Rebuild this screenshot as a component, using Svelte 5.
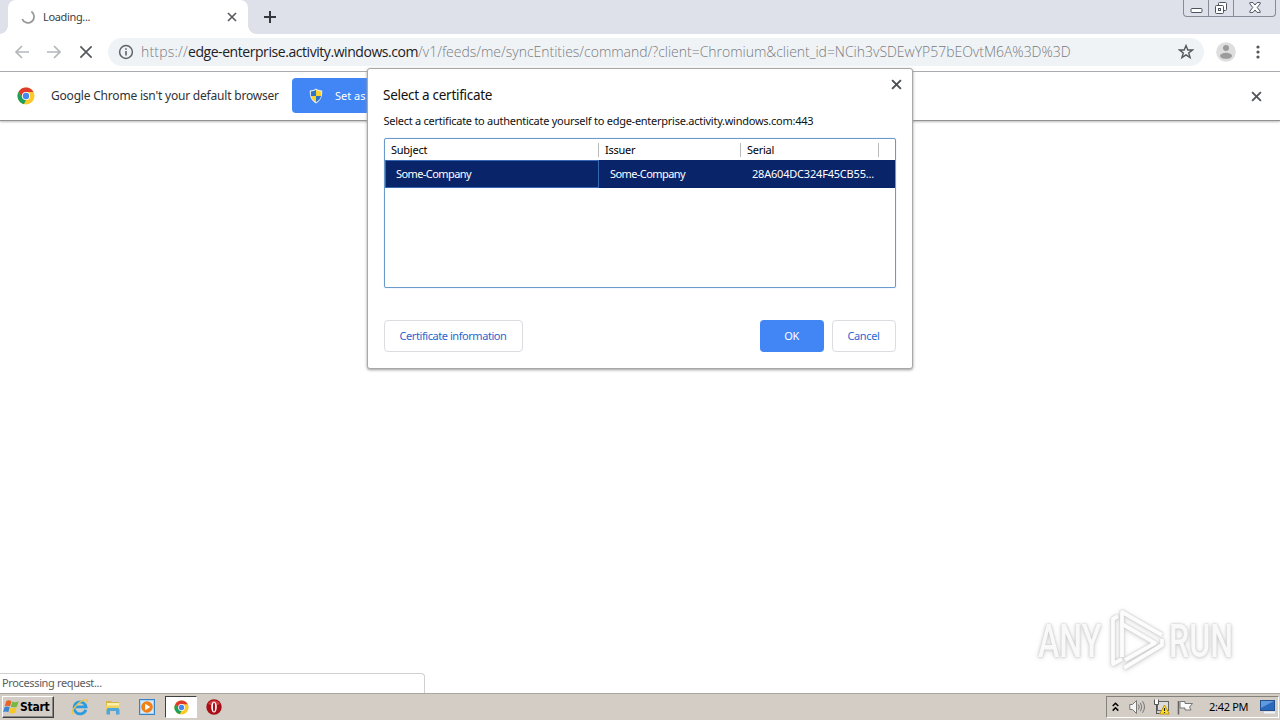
<script>
	const columns = [
		{ label: 'Subject', value: 'Some-Company' },
		{ label: 'Issuer', value: 'Some-Company' },
		{ label: 'Serial', value: '28A604DC324F45CB55...' }
	];
</script>

{#snippet cross(size, width, color)}
	<svg width={size} height={size} viewBox="0 0 10 10">
		<path d="M1 1L9 9M9 1L1 9" stroke={color} stroke-width={width} fill="none" />
	</svg>
{/snippet}

{#snippet chrome(size)}
	<svg width={size} height={size} viewBox="0 0 18 18">
		<circle cx="9" cy="9" r="8.5" fill="#fbc928" />
		<path d="M1.6 4.8A8.5 8.5 0 0 1 16.5 5H9L5.4 11Z" fill="#df3b2d" />
		<path d="M1.6 4.8L5.6 11L9 13L6.9 17.2A8.5 8.5 0 0 1 1.6 4.8Z" fill="#1da15a" />
		<circle cx="9" cy="9" r="4.1" fill="#fff" />
		<circle cx="9" cy="9" r="3.2" fill="#4688f0" />
	</svg>
{/snippet}

<div class="screen">
	<header class="tabstrip">
		<div class="prev-tab"></div>
		<div class="tab">
			<svg class="spinner" width="14" height="14" viewBox="0 0 14 14">
				<path d="M10.4 1.6A6.2 6.2 0 1 1 1.2 9.2" fill="none" stroke="#999" stroke-width="1.8" />
			</svg>
			<span class="tab-title">Loading...</span>
			{@render cross(10, 1.6, '#55585c')}
		</div>
		<div class="new-tab">
			<svg width="12" height="12" viewBox="0 0 12 12"><path d="M6 0V12M0 6H12" stroke="#34373b" stroke-width="2" /></svg>
		</div>
		<div class="window-buttons">
			<span class="wb min">
				<svg width="13" height="7" viewBox="0 0 13 7"><rect x="1" y="1.5" width="11" height="4" rx="1" fill="#fff" stroke="#4e5360" /></svg>
			</span>
			<span class="wb max">
				<svg width="14" height="14" viewBox="0 0 14 14">
					<rect x="4.5" y="1.5" width="8" height="8" rx="1" fill="#fff" stroke="#4e5360" />
					<rect x="1.5" y="4.5" width="8" height="8" rx="1" fill="#fff" stroke="#4e5360" />
					<rect x="4.5" y="7.5" width="2" height="2" fill="#fff" stroke="#4e5360" />
				</svg>
			</span>
			<span class="wb close">
				<svg width="12" height="11" viewBox="0 0 12 11">
					<path d="M.8 .6H4L6 3L8 .6H11.2V1.8L8.2 5.5L11.2 9.2V10.4H8L6 8L4 10.4H.8V9.2L3.8 5.5L.8 1.8Z" fill="#fff" stroke="#4e5360" />
				</svg>
			</span>
		</div>
	</header>

	<nav class="toolbar">
		<svg class="nav-icon" width="16" height="14" viewBox="0 0 16 14"><path d="M15 7H2M8 1L2 7L8 13" fill="none" stroke="#b5b7ba" stroke-width="1.7" /></svg>
		<svg class="nav-icon" width="16" height="14" viewBox="0 0 16 14"><path d="M1 7H14M8 1L14 7L8 13" fill="none" stroke="#b5b7ba" stroke-width="1.7" /></svg>
		<span class="stop">{@render cross(14, 1.2, '#54575b')}</span>
		<div class="omnibox">
			<svg width="16" height="16" viewBox="0 0 16 16">
				<circle cx="8" cy="8" r="6.4" fill="none" stroke="#5f6368" stroke-width="1.5" />
				<path d="M8 7V11.6M8 4.2V5.8" stroke="#5f6368" stroke-width="1.6" />
			</svg>
			<div class="url"><span class="scheme">https://</span><span class="host">edge-enterprise.activity.windows.com</span><span class="path">/v1/feeds/me/syncEntities/command/?client=Chromium&amp;client_id=NCih3vSDEwYP57bEOvtM6A%3D%3D</span></div>
			<svg class="star" width="16" height="16" viewBox="0 0 16 16">
				<path d="M8 1.6L9.8 6H14.4L10.7 8.9L12.1 13.6L8 10.8L3.9 13.6L5.3 8.9L1.6 6H6.2Z" fill="none" stroke="#54575b" stroke-width="1.4" />
			</svg>
		</div>
		<svg class="avatar" width="20" height="20" viewBox="0 0 20 20">
			<circle cx="10" cy="10" r="9.8" fill="#dedede" />
			<circle cx="10" cy="6" r="3" fill="#9b9b9b" />
			<ellipse cx="10" cy="13.8" rx="6" ry="3" fill="#9b9b9b" />
		</svg>
		<svg class="kebab" width="4" height="14" viewBox="0 0 4 14">
			<circle cx="2" cy="2" r="1.6" fill="#54575b" /><circle cx="2" cy="7" r="1.6" fill="#54575b" /><circle cx="2" cy="12" r="1.6" fill="#54575b" />
		</svg>
	</nav>

	<div class="infobar">
		{@render chrome(18)}
		<span class="info-text">Google Chrome isn't your default browser</span>
		<button class="set-default">
			<svg width="14" height="16" viewBox="0 0 14 16">
				<path d="M7 .5C5 2 3 2.4 .8 2.4C.5 8 2 12.5 7 15.4C12 12.5 13.5 8 13.2 2.4C11 2.4 9 2 7 .5Z" fill="#e8edf4" />
				<path d="M7 1.8C5.5 2.8 3.8 3.3 1.9 3.4V8H7Z" fill="#2f73c4" />
				<path d="M7 1.8C8.5 2.8 10.2 3.3 12.1 3.4V8H7Z" fill="#f8d231" />
				<path d="M2 8H7V14.2C4 12.4 2.5 10.6 2 8Z" fill="#f8d231" />
				<path d="M12 8H7V14.2C10 12.4 11.5 10.6 12 8Z" fill="#2f73c4" />
			</svg>
			<span>Set as</span>
		</button>
		<span class="info-close">{@render cross(11, 1.7, '#54575b')}</span>
	</div>

	<main class="content">
		<div class="watermark">
			<span class="any">ANY</span>
			<svg width="58" height="66" viewBox="0 0 58 66">
				<g fill="none" stroke="#fcfcfc" stroke-width="3.8" stroke-linejoin="round">
					<path d="M14 50V5L54 28" />
					<path d="M14 17L47 36L17 53" />
					<path d="M5 52V12L10 9" />
					<path d="M5 52V57L14 52" />
					<path d="M16 61L54 38V32" />
				</g>
			</svg>
			<span class="run">RUN</span>
		</div>
		<div class="status">Processing request...</div>
	</main>

	<footer class="taskbar">
		<button class="start">
			<svg width="17" height="16" viewBox="0 0 17 16">
				<path d="M3.2 2.2C5 1 6.8 1.2 8.4 2.2L7 7.4C5.4 6.4 3.6 6.4 1.8 7.3Z" fill="#e8632b" />
				<path d="M9.2 2.6C11 3.6 13 3.6 15.6 2.2L14.1 7.4C12 8.6 9.8 8.6 7.8 7.8Z" fill="#79b843" />
				<path d="M1.5 8.2C3.2 7.3 5 7.3 6.7 8.3L5.3 13.3C3.6 12.4 1.8 12.4 .1 13.2Z" fill="#3e85d1" />
				<path d="M7.5 8.7C9.5 9.6 11.6 9.6 13.8 8.3L12.4 13.4C10.3 14.8 8 14.6 6.1 13.7Z" fill="#f8c727" />
			</svg>
			<span>Start</span>
		</button>
		<div class="launch">
			<span class="app">
				<svg width="18" height="18" viewBox="0 0 18 18">
					<path d="M14.8 11.8A6 6 0 1 1 15 8.8H5" fill="none" stroke="#2d9bdf" stroke-width="2.8" />
					<path d="M2.2 16.2C-1 13.5 6 4.8 12.5 2.2C16.5 .7 17.4 2.2 15.8 5" fill="none" stroke="#f0c544" stroke-width="1.3" />
				</svg>
			</span>
			<span class="app">
				<svg width="16" height="16" viewBox="0 0 16 16">
					<path d="M1 2H6L7 3H14V12H1Z" fill="#d9b548" />
					<path d="M2 4H14V9H2Z" fill="#fcf0a9" />
					<path d="M1 6.5H15V12H1Z" fill="#f0d264" />
					<path d="M1.5 15.5V11Q1.5 9 3.5 9H12.5Q14.5 9 14.5 11V15.5H11V12H5V15.5Z" fill="#4fa6d8" />
				</svg>
			</span>
			<span class="app">
				<svg width="16" height="16" viewBox="0 0 16 16">
					<rect x=".5" y=".5" width="15" height="15" fill="#a9d3f4" stroke="#3982c4" />
					<rect x="2" y="2" width="12" height="12" fill="#d7ebfa" />
					<circle cx="8" cy="8" r="5.8" fill="#ef8118" />
					<path d="M6.2 4.8L11.3 8L6.2 11.2Z" fill="#fff" />
				</svg>
			</span>
			<span class="app active">{@render chrome(15)}</span>
			<span class="app">
				<svg width="16" height="16" viewBox="0 0 16 16">
					<circle cx="8" cy="8" r="7.7" fill="#a80f16" />
					<path d="M2 5A7 7 0 0 1 14 5Q8 8 2 5Z" fill="#cf3b3e" />
					<ellipse cx="8" cy="8" rx="2.8" ry="5.6" fill="#fff" />
					<ellipse cx="8" cy="8" rx="1.1" ry="4.5" fill="#a80f16" />
				</svg>
			</span>
		</div>
		<div class="tray">
			<svg width="7" height="10" viewBox="0 0 7 10"><path d="M.7 4L3.5 1.2L6.3 4M.7 8.6L3.5 5.8L6.3 8.6" fill="none" stroke="#000" stroke-width="1.5" /></svg>
			<svg class="speaker" width="17" height="16" viewBox="0 0 17 16">
				<path d="M.8 5.5H3.5L7.5 1.5V14.5L3.5 10.5H.8Z" fill="#f5f5f5" stroke="#777" />
				<path d="M9.5 5.5Q11 8 9.5 10.5M11.5 3.8Q14 8 11.5 12.2M13.5 2.2Q17.5 8 13.5 13.8" fill="none" stroke="#777" />
			</svg>
			<svg class="network" width="17" height="16" viewBox="0 0 17 16">
				<rect x="4.5" y="2.5" width="11" height="9" fill="#dcdcdc" stroke="#666" />
				<path d="M1.5 .5V5.5H5.5V.5M3.5 5.5V15" fill="#fff" stroke="#555" />
				<path d="M4 14.5H10" stroke="#555" />
				<path d="M11.5 6L16.3 15H6.7Z" fill="#ffe12e" stroke="#c09412" />
				<path d="M11.5 9V12M11.5 13V14" stroke="#222" stroke-width="1.2" />
			</svg>
			<svg class="flag" width="17" height="15" viewBox="0 0 17 15">
				<path d="M1.5 1V14.5" stroke="#666" stroke-width="1.6" />
				<path d="M3 1.5H8V3.5H15.5L12.5 7L14 10H8V8H3Z" fill="#fafafa" stroke="#777" />
			</svg>
			<span class="clock">2:42 PM</span>
			<svg class="desktop" width="15" height="14" viewBox="0 0 15 14">
				<rect x=".5" y=".5" width="14" height="10" fill="#2b69bd" stroke="#245090" />
				<path d="M1 1H14L1 8Z" fill="#5f9ae0" />
				<path d="M4 12.5H15" stroke="#edf3fa" stroke-width="2" />
			</svg>
		</div>
	</footer>

	<section class="dialog">
		<div class="dialog-close">{@render cross(11, 1.8, '#4c4f53')}</div>
		<h1>Select a certificate</h1>
		<p>Select a certificate to authenticate yourself to edge-enterprise.activity.windows.com:443</p>
		<div class="table">
			<div class="row head">
				{#each columns as column}
					<div class="th">{column.label}</div>
				{/each}
			</div>
			<div class="row selected">
				{#each columns as column}
					<div class="td">{column.value}</div>
				{/each}
			</div>
		</div>
		<div class="actions">
			<button class="info">Certificate information</button>
			<button class="ok">OK</button>
			<button class="cancel">Cancel</button>
		</div>
	</section>
</div>

<style>
	:global(body) {
		margin: 0;
		overflow: hidden;
	}

	.screen {
		position: relative;
		display: flex;
		flex-direction: column;
		width: 1280px;
		height: 720px;
		overflow: hidden;
		background: #fff;
		font-family: "Noto Sans", "Open Sans", sans-serif;
		font-size: 11px;
		color: #111;
	}

	.screen * {
		box-sizing: border-box;
	}

	svg {
		display: block;
		flex: none;
	}

	button {
		font: inherit;
		padding: 0;
		border: none;
		white-space: nowrap;
	}

	.tabstrip {
		display: flex;
		flex: none;
		height: 34px;
		background: #dee1e9;
	}

	.prev-tab {
		width: 8px;
		background: radial-gradient(circle at 0 0, #dee1e9 7.5px, #fff 8px) 0 26px / 8px 8px no-repeat;
	}

	.tab {
		display: flex;
		align-items: center;
		width: 240px;
		padding: 0 11px 0 13px;
		background: #fff;
		border-radius: 8px 8px 0 0;
	}

	.tab-title {
		flex: 1;
		margin-left: 8px;
		padding-bottom: 2px;
		letter-spacing: -0.35px;
		color: #3c4043;
	}

	.new-tab {
		display: flex;
		align-items: center;
		width: 40px;
		padding-left: 16px;
		background: radial-gradient(circle at 8px 0, #dee1e9 7.5px, #fff 8px) 0 26px / 8px 8px no-repeat;
	}

	.window-buttons {
		display: flex;
		height: 17px;
		margin: 0 4px 0 auto;
		border: 1px solid #858b97;
		border-top: none;
		border-radius: 0 0 4px 4px;
	}

	.wb {
		display: flex;
		align-items: flex-end;
		justify-content: center;
		width: 25px;
		padding-bottom: 2px;
		border-right: 1px solid #858b97;
	}

	.wb.max {
		padding-bottom: 1px;
	}

	.wb.close {
		width: 41px;
		padding-bottom: 3px;
		border-right: none;
	}

	.toolbar {
		display: flex;
		align-items: center;
		flex: none;
		height: 38px;
		padding: 0 20px 1px 14px;
		border-bottom: 1px solid #a9abae;
	}

	.nav-icon {
		margin-right: 16px;
	}

	.stop {
		margin: 0 15px 0 1px;
	}

	.omnibox {
		display: flex;
		align-items: center;
		width: 1096px;
		height: 28px;
		padding: 0 10px;
		border-radius: 14px;
		background: #f0f3f6;
	}

	.url {
		flex: 1;
		margin-left: 7px;
		padding-bottom: 2px;
		font-family: "Open Sans", sans-serif;
		font-size: 14px;
		white-space: nowrap;
		font-weight: 300;
		color: #777b80;
	}

	.scheme {
		letter-spacing: 0.2px;
	}

	.host {
		font-weight: 400;
		letter-spacing: -0.44px;
		color: #202124;
	}

	.path {
		letter-spacing: -0.02px;
	}

	.avatar {
		margin-left: 12px;
	}

	.kebab {
		margin-left: auto;
	}

	.infobar {
		display: flex;
		align-items: center;
		flex: none;
		height: 49px;
		padding: 0 18px 0 17px;
		border-bottom: 1px solid #929292;
		box-shadow: 0 1px 2px #bbb;
	}

	.info-text {
		width: 241px;
		margin-left: 16px;
		padding-bottom: 2px;
		font-size: 12px;
		letter-spacing: -0.2px;
		white-space: nowrap;
		color: #303236;
	}

	.set-default {
		display: flex;
		align-items: center;
		width: 132px;
		height: 35px;
		margin-bottom: 1px;
		padding-left: 17px;
		border-radius: 4px;
		background: #4285f4;
		color: #fff;
	}

	.set-default span {
		margin-left: 12px;
		padding-bottom: 1px;
	}

	.info-close {
		margin-left: auto;
	}

	.content {
		position: relative;
		flex: 1;
	}

	.watermark {
		position: absolute;
		left: 1038px;
		top: 486px;
		display: flex;
		align-items: center;
		font-family: Roboto, sans-serif;
		font-size: 46px;
		font-weight: 500;
		line-height: 1;
		color: #f9f9f9;
		filter: drop-shadow(0 0 1px #c4c4c4) drop-shadow(0 1px 2px #d8d8d8);
	}

	.any,
	.run {
		width: 65px;
		padding-top: 2px;
		transform: scaleX(0.7);
		transform-origin: 0 50%;
	}

	.watermark svg {
		margin: 0 3px 0 5px;
	}

	.status {
		position: absolute;
		left: -1px;
		bottom: 0;
		width: 426px;
		height: 20px;
		padding: 0 0 0 2px;
		border: 1px solid #d0d0d0;
		border-bottom: none;
		border-radius: 0 4px 0 0;
		line-height: 17px;
		letter-spacing: -0.36px;
		color: #5a5c60;
	}

	.taskbar {
		display: flex;
		align-items: center;
		flex: none;
		height: 27px;
		border-top: 1px solid #aaa7a1;
		background: #d4cdc5;
	}

	.start {
		display: flex;
		align-items: center;
		width: 52px;
		height: 22px;
		margin-left: 2px;
		border: 1px solid #fff;
		border-right-color: #404040;
		border-bottom-color: #404040;
		box-shadow: inset -1px -1px #888;
		background: #d4cdc5;
		font-family: "DejaVu Sans Condensed", "DejaVu Sans", sans-serif;
		font-size: 12px;
		font-weight: bold;
		letter-spacing: -0.25px;
		color: #000;
	}

	.launch {
		display: flex;
		margin-left: 9px;
	}

	.app {
		display: flex;
		align-items: center;
		justify-content: center;
		width: 33.5px;
		height: 22px;
	}

	.app.active {
		width: 32px;
		margin: 0 0.5px 0 1.5px;
		border: 1px solid #404040;
		border-right-color: #fff;
		border-bottom-color: #fff;
		background: #fff;
	}

	.tray {
		display: flex;
		align-items: center;
		width: 173px;
		height: 22px;
		margin: 0 1px 0 auto;
		padding-left: 5px;
		border: 1px solid #85817b;
		border-right-color: #fff;
		border-bottom-color: #fff;
	}

	.speaker {
		margin-left: 10px;
	}

	.network {
		margin-left: 7px;
	}

	.flag {
		margin-left: 7px;
	}

	.clock {
		width: 40px;
		margin-left: 15px;
		padding-bottom: 1px;
		letter-spacing: -0.3px;
		white-space: nowrap;
		color: #000;
	}

	.desktop {
		margin-left: 11px;
	}

	.dialog {
		position: absolute;
		left: 367px;
		top: 68px;
		width: 546px;
		height: 301px;
		padding: 17px 16px 0;
		border: 1px solid #a8a8a8;
		border-radius: 3px;
		background: #fff;
		box-shadow: 0 1px 3px #999;
	}

	.dialog-close {
		position: absolute;
		right: 10px;
		top: 10px;
	}

	h1 {
		margin: 0 0 0 -1px;
		font-size: 13.5px;
		font-weight: 400;
		line-height: 18px;
		letter-spacing: -0.28px;
		white-space: nowrap;
	}

	p {
		margin: 9px 0 9px -0.5px;
		line-height: 16px;
		letter-spacing: -0.26px;
		white-space: nowrap;
	}

	.table {
		width: 512px;
		height: 150px;
		border: 1px solid #6a9ac9;
		border-radius: 2px;
		box-shadow: 0 0 1px #8ab4e0;
	}

	.row {
		display: grid;
		grid-template-columns: 214px 142px 138px 16px;
		align-items: center;
	}

	.head {
		height: 21px;
	}

	.th {
		height: 14px;
		padding-left: 6px;
		border-right: 1px solid #bbb;
		line-height: 14px;
		letter-spacing: -0.25px;
		color: #000;
	}

	.selected {
		height: 28px;
		background: #0a246a;
		color: #fff;
	}

	.td {
		height: 28px;
		padding-left: 11px;
		line-height: 28px;
		letter-spacing: -0.58px;
		white-space: nowrap;
	}

	.selected .td:first-child {
		border: 1px solid #3569b5;
		padding-left: 10px;
		line-height: 26px;
	}

	.selected .td:last-child {
		letter-spacing: -0.2px;
	}

	.actions {
		display: flex;
		margin-top: 32px;
	}

	.actions button {
		width: 64px;
		height: 32px;
		padding: 0 1px 2px 0;
		border: 1px solid #dadce0;
		border-radius: 4px;
		background: #fff;
		letter-spacing: -0.35px;
		color: #2c66cf;
	}

	.actions .info {
		width: 139px;
		letter-spacing: -0.44px;
	}

	.actions .ok {
		margin: 0 8px 0 auto;
		border: none;
		background: #4285f4;
		color: #fff;
	}
</style>
